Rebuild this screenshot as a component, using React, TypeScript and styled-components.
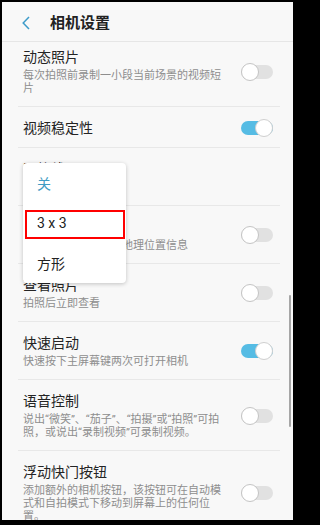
import styled, { createGlobalStyle } from 'styled-components';

const GlobalStyle = createGlobalStyle`
    html, body {
        margin: 0;
        padding: 0;
        background: #000;
    }
    body {
        font-family: "Noto Sans CJK SC", "Roboto", sans-serif;
    }
`;

const Frame = styled.div`
    box-sizing: border-box;
    width: 298px;
    height: 525px;
    padding: 2px 5px 5px 2px;
    background: #000;
`;

const Screen = styled.div`
    position: relative;
    display: flex;
    flex-direction: column;
    height: 100%;
    overflow: hidden;
    background: #f8f8f8;
`;

const Header = styled.div`
    flex: none;
    display: flex;
    align-items: center;
    gap: 20px;
    height: 39px;
    padding: 0 0 0 20px;
    position: relative;
    z-index: 1;
    background: #f8f8f8;
    border-bottom: 1px solid #e6e6e6;
`;

const BackButton = styled.svg`
    display: block;
    width: 8px;
    height: 14px;
    margin-top: 2px;
`;

const Title = styled.h1`
    margin: 0;
    font-size: 15px;
    font-weight: 600;
    color: #222;
`;

const Scroller = styled.div`
    flex: 1;
    overflow: hidden;
`;

const List = styled.div`
    margin: -6px 13px 0 16px;
`;

const Row = styled.div<{ $last?: boolean }>`
    display: flex;
    align-items: center;
    gap: 14px;
    padding: 12px 7px 11px 5px;
    border-bottom: 1px solid ${p => (p.$last ? 'transparent' : '#e8e8e8')};
`;

const RowText = styled.div`
    flex: 1;
    min-width: 0;
`;

const RowTitle = styled.div`
    font-size: 14px;
    line-height: 17px;
    color: #242424;
`;

/* Roboto first keeps the curly quotes narrow */
const RowSub = styled.div<{ $accent?: boolean }>`
    margin-top: 4px;
    font-family: "Roboto", "Noto Sans CJK SC", sans-serif;
    font-size: 11px;
    line-height: 13px;
    color: ${p => (p.$accent ? '#3f9cc4' : '#8e8e8e')};
`;

const Track = styled.div<{ $on: boolean }>`
    flex: none;
    position: relative;
    width: 32px;
    height: 14px;
    border-radius: 7px;
    background: ${p => (p.$on ? '#56bce4' : '#e1e1e1')};
`;

const Knob = styled.div<{ $on: boolean }>`
    position: absolute;
    top: -2px;
    left: ${p => (p.$on ? '14px' : '0')};
    box-sizing: border-box;
    width: 18px;
    height: 18px;
    border-radius: 50%;
    background: #fff;
    border: 1px solid ${p => (p.$on ? '#cfcfcf' : '#c4c4c4')};
`;

const Popup = styled.div`
    position: absolute;
    left: 21px;
    top: 161px;
    width: 103px;
    background: #fff;
    border-radius: 4px;
    box-shadow: 0 1px 4px rgba(0, 0, 0, 0.22);
    z-index: 2;
`;

const PopupItem = styled.div<{ $selected?: boolean }>`
    position: relative;
    display: flex;
    align-items: center;
    height: 40px;
    padding-left: 14px;
    font-family: "Roboto", "Noto Sans CJK SC", sans-serif;
    font-size: 14px;
    color: ${p => (p.$selected ? '#3f9cc4' : '#222')};
`;

const Highlight = styled.div`
    position: absolute;
    left: 2px;
    right: 1px;
    top: 7px;
    height: 29px;
    box-sizing: border-box;
    border: 2px solid #f00;
`;

const ScrollBar = styled.div`
    position: absolute;
    right: 2px;
    top: 293px;
    width: 2px;
    height: 132px;
    background: #a6a6a6;
    border-radius: 1px;
`;

type Setting = {
    title: string;
    sub?: string;
    accent?: boolean;
    on?: boolean;
    toggle?: boolean;
};

const settings: Setting[] = [
    { title: '动态照片', sub: '每次拍照前录制一小段当前场景的视频短片', toggle: true, on: false },
    { title: '视频稳定性', toggle: true, on: true },
    { title: '网格线', sub: '关', accent: true },
    { title: '位置标签', sub: '在照片和视频中添加地理位置信息', toggle: true, on: false },
    { title: '查看照片', sub: '拍照后立即查看', toggle: true, on: false },
    { title: '快速启动', sub: '快速按下主屏幕键两次可打开相机', toggle: true, on: true },
    { title: '语音控制', sub: '说出“微笑”、“茄子”、“拍摄”或“拍照”可拍照，或说出“录制视频”可录制视频。', toggle: true, on: false },
    { title: '浮动快门按钮', sub: '添加额外的相机按钮，该按钮可在自动模式和自拍模式下移动到屏幕上的任何位置。', toggle: true, on: false },
];

const Toggle = ({ on }: { on: boolean }) => (
    <Track $on={on}>
        <Knob $on={on} />
    </Track>
);

const App = () => {
    return (
        <>
            <GlobalStyle />
            <Frame>
                <Screen>
                    <Header>
                        <BackButton viewBox="0 0 8 14">
                            <polyline points="7,1 1.2,7 7,13" fill="none" stroke="#3d9bc9" strokeWidth="1.5" />
                        </BackButton>
                        <Title>相机设置</Title>
                    </Header>
                    <Scroller>
                        <List>
                            {settings.map((s, i) => (
                                <Row key={s.title} $last={i === settings.length - 1}>
                                    <RowText>
                                        <RowTitle>{s.title}</RowTitle>
                                        {s.sub && <RowSub $accent={s.accent}>{s.sub}</RowSub>}
                                    </RowText>
                                    {s.toggle && <Toggle on={!!s.on} />}
                                </Row>
                            ))}
                        </List>
                    </Scroller>
                    <Popup>
                        <PopupItem $selected>关</PopupItem>
                        <PopupItem>
                            3 x 3
                            <Highlight />
                        </PopupItem>
                        <PopupItem>方形</PopupItem>
                    </Popup>
                    <ScrollBar />
                </Screen>
            </Frame>
        </>
    );
};

export default App;
